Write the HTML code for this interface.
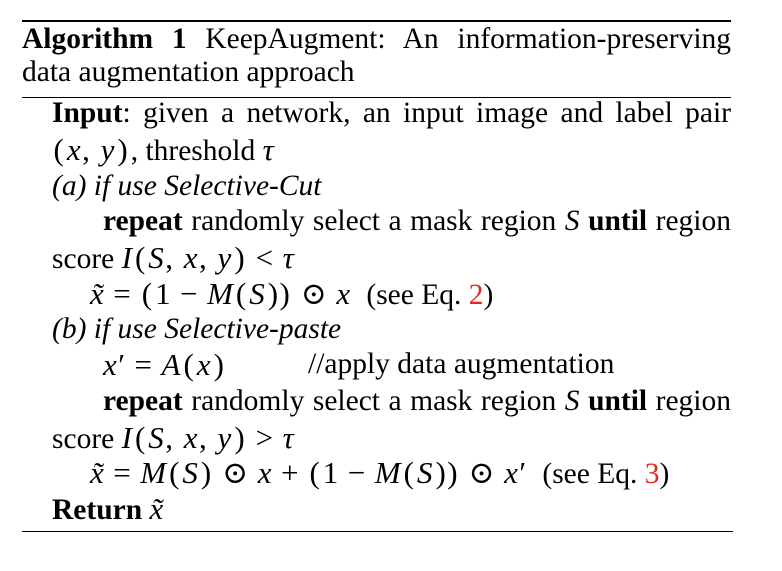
<!DOCTYPE html>
<html><head><meta charset="utf-8"><style>
html,body{margin:0;padding:0;background:#fff;}
body{width:782px;height:571px;position:relative;overflow:hidden;font-family:"Liberation Serif","DejaVu Serif",serif;color:#000;}
.l{position:absolute;font-size:29.5px;line-height:29.5px;white-space:nowrap;}
.j{text-align:justify;text-align-last:justify;white-space:normal;}
i{font-style:italic;}
b{font-weight:bold;}
.r{color:#e02a1f;}
.m{font-size:31px;letter-spacing:1.5px;}
.o{margin:0 8px;}
.p{margin:0 1.5px;}
.rule{position:absolute;background:#000;}
</style></head><body>
<div class="rule" style="left:22px;top:20px;width:709px;height:2px"></div>
<div class="rule" style="left:22px;top:97px;width:709px;height:1px"></div>
<div class="rule" style="left:22px;top:531px;width:711px;height:1px"></div>

<div class="l j" style="left:22px;top:25px;width:709px"><b>Algorithm 1</b> KeepAugment: An information-preserving</div>
<div class="l" style="left:22px;top:58px">data augmentation approach</div>
<div class="l j" style="left:52px;top:99px;width:679px"><b>Input</b>: given a network, an input image and label pair</div>
<div class="l" style="left:52px;top:135px"><span class="m"><span class="p">(</span><i>x</i>, <i>y</i><span class="p">)</span></span>, threshold <span class="m"><i>τ</i></span></div>
<div class="l" style="left:52px;top:172px"><i>(a) if use Selective-Cut</i></div>
<div class="l j" style="left:103px;top:207px;width:628px"><b>repeat</b> randomly select a mask region <i>S</i> <b>until</b> region</div>
<div class="l" style="left:52px;top:243px">score <span class="m"><i>I</i><span class="p">(</span><i>S</i>, <i>x</i>, <i>y</i><span class="p">)</span><span class="o">&lt;</span><i>τ</i></span></div>
<div class="l" style="left:90px;top:279px"><span class="m"><i>x̃</i><span class="o">=</span><span class="p">(</span>1<span class="o">−</span><i>M</i><span class="p">(</span><i>S</i><span class="p">))</span><span class="o">⊙</span><i>x</i></span> &nbsp;(see Eq. <span class="r">2</span>)</div>
<div class="l" style="left:52px;top:315px"><i>(b) if use Selective-paste</i></div>
<div class="l" style="left:103px;top:350px"><span class="m"><i>x</i>′<span class="o">=</span><i>A</i><span class="p">(</span><i>x</i><span class="p">)</span></span></div>
<div class="l" style="left:308px;top:350px">//apply data augmentation</div>
<div class="l j" style="left:103px;top:387px;width:628px"><b>repeat</b> randomly select a mask region <i>S</i> <b>until</b> region</div>
<div class="l" style="left:52px;top:423px">score <span class="m"><i>I</i><span class="p">(</span><i>S</i>, <i>x</i>, <i>y</i><span class="p">)</span><span class="o">&gt;</span><i>τ</i></span></div>
<div class="l" style="left:90px;top:458px"><span class="m"><i>x̃</i><span class="o">=</span><i>M</i><span class="p">(</span><i>S</i><span class="p">)</span><span class="o">⊙</span><i>x</i><span class="o">+</span><span class="p">(</span>1<span class="o">−</span><i>M</i><span class="p">(</span><i>S</i><span class="p">))</span><span class="o">⊙</span><i>x</i>′</span> &nbsp;(see Eq. <span class="r">3</span>)</div>
<div class="l" style="left:52px;top:494px"><b>Return</b> <span class="m"><i>x̃</i></span></div>
</body></html>
